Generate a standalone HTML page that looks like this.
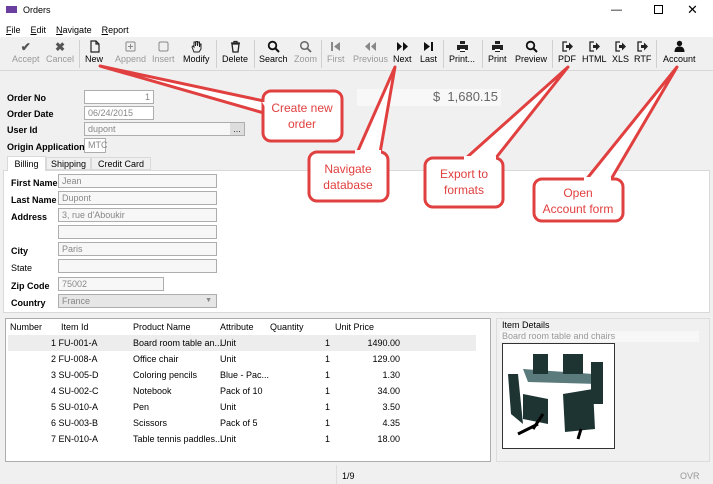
<!DOCTYPE html>
<html><head><meta charset="utf-8"><style>
*{box-sizing:border-box;margin:0;padding:0}
body{width:713px;height:484px;overflow:hidden;background:#f0f0f0;font-family:"Liberation Sans",sans-serif;font-size:9px;color:#000;position:relative}
.a{position:absolute}
.tb{position:absolute;top:40px;text-align:center;font-size:9px;color:#000}
.tb.d{color:#999}
.tb i{display:block;height:14px;font-style:normal;font-size:12px;font-weight:bold;line-height:14px}
.tb svg{display:block;margin:0 auto 1px;width:13px;height:13px}
.sep{position:absolute;top:40px;width:1px;height:28px;background:#d0d0d0}
.lbl{position:absolute;font-weight:bold;font-size:9px}
.inp{position:absolute;background:#f7f7f7;border:1px solid #adadad;height:14px;font-size:9px;color:#888;padding-left:3px;line-height:12px}
.w{background:#fff}
.row{position:absolute;left:10px;width:466px;height:16px;font-size:9px;line-height:16px}
.row span{position:absolute;white-space:nowrap}
</style></head><body>
<div class="a" style="left:0;top:0;width:713px;height:20px;background:#fff"></div>
<div class="a" style="left:6px;top:6px;width:11px;height:7px;background:#6a3fa0"></div>
<div class="a" style="left:23px;top:5px;font-size:9px">Orders</div>
<div class="a" style="left:611px;top:4px;font-size:11px">—</div>
<div class="a" style="left:654px;top:5px;width:9px;height:9px;border:1px solid #000"></div>
<div class="a" style="left:687px;top:2px;font-size:13px">✕</div>
<div class="a" style="left:0;top:20px;width:713px;height:17px;background:#fff"></div>
<div class="a" style="left:6px;top:25px"><u>F</u>ile &nbsp;&nbsp; <u>E</u>dit &nbsp;&nbsp; <u>N</u>avigate &nbsp;&nbsp; <u>R</u>eport</div>
<div class="a" style="left:0;top:70px;width:713px;height:1px;background:#d8d8d8"></div>
<div class="tb d" style="left:12px"><i style="color:#555">✔</i>Accept</div>
<div class="tb d" style="left:46px"><i style="color:#555">✖</i>Cancel</div>
<div class="sep" style="left:79px"></div>
<div class="tb" style="left:85px"><svg viewBox="0 0 13 13"><path d="M3 1h5l3 3v8H3z M8 1v3h3" fill="none" stroke="#222" stroke-width="1.2"/></svg>New</div>
<div class="tb d" style="left:115px"><svg viewBox="0 0 13 13"><rect x="2" y="2" width="9" height="9" rx="1" fill="none" stroke="#888"/><path d="M6.5 4v5M4 6.5h5" stroke="#888"/></svg>Append</div>
<div class="tb d" style="left:152px"><svg viewBox="0 0 13 13"><rect x="2" y="2" width="9" height="9" rx="1.5" fill="none" stroke="#888"/></svg>Insert</div>
<div class="tb" style="left:183px"><svg viewBox="0 0 13 13"><path d="M4 12 L2 7 L3 6 L4 7 V2 L5.5 2 V6 L6 1.5 L7.5 1.5 V6 L8 2 L9.5 2 V7 L10 4 L11 4 V9 L9 12z" fill="none" stroke="#222"/></svg>Modify</div>
<div class="sep" style="left:216px"></div>
<div class="tb" style="left:222px"><svg viewBox="0 0 13 13"><path d="M2 3h9M5 3V1.5h3V3M3 4h7l-1 8H4z" fill="none" stroke="#222" stroke-width="1.3"/></svg>Delete</div>
<div class="sep" style="left:254px"></div>
<div class="tb" style="left:259px"><svg viewBox="0 0 13 13"><circle cx="5.5" cy="5.5" r="3.8" fill="none" stroke="#111" stroke-width="1.8"/><path d="M8 8l4 4" stroke="#111" stroke-width="2"/></svg>Search</div>
<div class="tb d" style="left:294px"><svg viewBox="0 0 13 13"><circle cx="5.5" cy="5.5" r="3.8" fill="none" stroke="#666" stroke-width="1.5"/><path d="M8 8l4 4" stroke="#666" stroke-width="1.8"/></svg>Zoom</div>
<div class="sep" style="left:321px"></div>
<div class="tb d" style="left:327px"><svg viewBox="0 0 13 13"><path d="M3 2v9" stroke="#888" stroke-width="2"/><path d="M11 2v9L5 6.5z" fill="#888"/></svg>First</div>
<div class="tb d" style="left:353px"><svg viewBox="0 0 13 13"><path d="M6 2v9L1 6.5zM12 2v9L7 6.5z" fill="#888"/></svg>Previous</div>
<div class="tb" style="left:393px"><svg viewBox="0 0 13 13"><path d="M1 2v9l5-4.5zM7 2v9l5-4.5z" fill="#111"/></svg>Next</div>
<div class="tb" style="left:420px"><svg viewBox="0 0 13 13"><path d="M2 2v9l6-4.5z" fill="#111"/><path d="M10 2v9" stroke="#111" stroke-width="2"/></svg>Last</div>
<div class="sep" style="left:443px"></div>
<div class="tb" style="left:449px"><svg viewBox="0 0 13 13"><path d="M4 1h5v3H4zM1 5h11v5H9v2H4v-2H1z" fill="#222"/><rect x="4" y="9" width="5" height="2" fill="#fff"/></svg>Print...</div>
<div class="sep" style="left:482px"></div>
<div class="tb" style="left:488px"><svg viewBox="0 0 13 13"><path d="M4 1h5v3H4zM1 5h11v5H9v2H4v-2H1z" fill="#222"/><rect x="4" y="9" width="5" height="2" fill="#fff"/></svg>Print</div>
<div class="tb" style="left:515px"><svg viewBox="0 0 13 13"><circle cx="5.5" cy="5.5" r="3.8" fill="none" stroke="#111" stroke-width="1.8"/><path d="M8 8l4 4" stroke="#111" stroke-width="2"/></svg>Preview</div>
<div class="sep" style="left:552px"></div>
<div class="tb" style="left:558px"><svg viewBox="0 0 13 13"><path d="M6 2H2v9h4" fill="none" stroke="#222" stroke-width="1.3"/><path d="M5 5h3V2.5l4 4-4 4V8H5z" fill="#222"/></svg>PDF</div>
<div class="tb" style="left:582px"><svg viewBox="0 0 13 13"><path d="M6 2H2v9h4" fill="none" stroke="#222" stroke-width="1.3"/><path d="M5 5h3V2.5l4 4-4 4V8H5z" fill="#222"/></svg>HTML</div>
<div class="tb" style="left:612px"><svg viewBox="0 0 13 13"><path d="M6 2H2v9h4" fill="none" stroke="#222" stroke-width="1.3"/><path d="M5 5h3V2.5l4 4-4 4V8H5z" fill="#222"/></svg>XLS</div>
<div class="tb" style="left:634px"><svg viewBox="0 0 13 13"><path d="M6 2H2v9h4" fill="none" stroke="#222" stroke-width="1.3"/><path d="M5 5h3V2.5l4 4-4 4V8H5z" fill="#222"/></svg>RTF</div>
<div class="sep" style="left:656px"></div>
<div class="tb" style="left:663px"><svg viewBox="0 0 13 13"><circle cx="6.5" cy="3.5" r="2.7" fill="#111"/><path d="M1.5 12c0-4 2-5.5 5-5.5s5 1.5 5 5.5z" fill="#111"/></svg>Account</div>

<div class="lbl" style="left:7px;top:93px">Order No</div>
<div class="inp w" style="left:84px;top:90px;width:70px;text-align:right;padding-right:3px">1</div>
<div class="lbl" style="left:7px;top:109px">Order Date</div>
<div class="inp w" style="left:84px;top:106px;width:70px">06/24/2015</div>
<div class="lbl" style="left:7px;top:125px">User Id</div>
<div class="inp" style="left:84px;top:122px;width:161px">dupont<span style="position:absolute;right:0;top:0;width:14px;height:12px;background:#ddd;color:#333;text-align:center">...</span></div>
<div class="lbl" style="left:7px;top:142px">Origin Application</div>
<div class="inp w" style="left:84px;top:138px;width:22px;height:15px">MTC</div>
<div class="a" style="left:357px;top:89px;width:144px;height:17px;background:#f8f8f8;text-align:right;font-size:13px;color:#666;padding-right:3px">$&nbsp; 1,680.15</div>

<div class="a" style="left:3px;top:170px;width:707px;height:143px;background:#fff;border:1px solid #d9d9d9"></div>
<div class="a" style="left:7px;top:156px;width:39px;height:15px;background:#fff;border:1px solid #d9d9d9;border-bottom:none;text-align:center;line-height:14px">Billing</div>
<div class="a" style="left:46px;top:157px;width:45px;height:13px;border:1px solid #d9d9d9;text-align:center;line-height:12px">Shipping</div>
<div class="a" style="left:91px;top:157px;width:60px;height:13px;border:1px solid #d9d9d9;text-align:center;line-height:12px">Credit Card</div>
<div class="lbl" style="left:11px;top:178px">First Name</div><div class="inp" style="left:58px;top:174px;width:159px">Jean</div>
<div class="lbl" style="left:11px;top:195px">Last Name</div><div class="inp" style="left:58px;top:191px;width:159px">Dupont</div>
<div class="lbl" style="left:11px;top:212px">Address</div><div class="inp" style="left:58px;top:208px;width:159px">3, rue d'Aboukir</div>
<div class="inp" style="left:58px;top:225px;width:159px"></div>
<div class="lbl" style="left:11px;top:246px">City</div><div class="inp" style="left:58px;top:242px;width:159px">Paris</div>
<div class="a" style="left:11px;top:263px">State</div><div class="inp" style="left:58px;top:259px;width:159px"></div>
<div class="lbl" style="left:11px;top:281px">Zip Code</div><div class="inp" style="left:58px;top:277px;width:106px">75002</div>
<div class="lbl" style="left:11px;top:298px">Country</div><div class="inp" style="left:58px;top:294px;width:159px;background:#e6e6e6">France<span style="position:absolute;right:4px;font-size:7px">▼</span></div>

<div class="a" style="left:5px;top:318px;width:486px;height:144px;background:#fff;border:1px solid #adadad"></div>
<div class="row" style="top:319px"><span style="left:0">Number</span><span style="left:51px">Item Id</span><span style="left:123px">Product Name</span><span style="left:210px">Attribute</span><span style="left:260px">Quantity</span><span style="left:325px">Unit Price</span></div>
<div class="a" style="left:8px;top:335px;width:468px;height:16px;background:#ededed"></div>
<div class="row" style="top:335px"><span style="left:41px">1 FU-001-A</span><span style="left:123px">Board room table an...</span><span style="left:210px">Unit</span><span style="left:315px">1</span><span style="left:330px;width:60px;text-align:right">1490.00</span></div>
<div class="row" style="top:351px"><span style="left:41px">2 FU-008-A</span><span style="left:123px">Office chair</span><span style="left:210px">Unit</span><span style="left:315px">1</span><span style="left:330px;width:60px;text-align:right">129.00</span></div>
<div class="row" style="top:367px"><span style="left:41px">3 SU-005-D</span><span style="left:123px">Coloring pencils</span><span style="left:210px">Blue - Pac...</span><span style="left:315px">1</span><span style="left:330px;width:60px;text-align:right">1.30</span></div>
<div class="row" style="top:383px"><span style="left:41px">4 SU-002-C</span><span style="left:123px">Notebook</span><span style="left:210px">Pack of 10</span><span style="left:315px">1</span><span style="left:330px;width:60px;text-align:right">34.00</span></div>
<div class="row" style="top:399px"><span style="left:41px">5 SU-010-A</span><span style="left:123px">Pen</span><span style="left:210px">Unit</span><span style="left:315px">1</span><span style="left:330px;width:60px;text-align:right">3.50</span></div>
<div class="row" style="top:415px"><span style="left:41px">6 SU-003-B</span><span style="left:123px">Scissors</span><span style="left:210px">Pack of 5</span><span style="left:315px">1</span><span style="left:330px;width:60px;text-align:right">4.35</span></div>
<div class="row" style="top:431px"><span style="left:41px">7 EN-010-A</span><span style="left:123px">Table tennis paddles...</span><span style="left:210px">Unit</span><span style="left:315px">1</span><span style="left:330px;width:60px;text-align:right">18.00</span></div>
<div class="a" style="left:496px;top:318px;width:214px;height:144px;border:1px solid #ddd"></div>
<div class="a" style="left:502px;top:320px">Item Details</div>
<div class="a" style="left:500px;top:331px;width:199px;height:11px;background:#f7f7f7;color:#999;padding-left:2px">Board room table and chairs</div>
<div class="a" style="left:502px;top:343px;width:113px;height:106px;background:#fff;border:1px solid #333">
<svg width="111" height="104" viewBox="0 0 111 104"><path d="M20 25 L90 30 L95 40 L25 38Z" fill="#5a7a7c"/><path d="M5 30 L15 30 L20 80 L8 70Z M30 10 L45 10 L45 30 L30 30Z M60 10 L80 10 L80 30 L60 30Z M88 18 L100 18 L100 60 L88 60Z M60 50 L90 45 L92 85 L62 88Z M20 50 L45 55 L45 80 L20 75Z" fill="#1e3433"/><path d="M15 90 L35 80 M75 95 L78 85 M40 70 L30 85" stroke="#000" stroke-width="3"/></svg></div>
<div class="a" style="left:342px;top:471px">1/9</div>
<div class="a" style="left:680px;top:471px;color:#999">OVR</div>
<div class="a" style="left:336px;top:465px;width:1px;height:19px;background:#ddd"></div>

<svg class="a" style="left:0;top:0" width="713" height="484">
<g fill="#fff" stroke="#e0403f" stroke-width="3" stroke-linejoin="round">
<path d="M100 66 L264 101 L264 113 Z"/>
<path d="M395 67 L357 153 L380 153 Z"/>
<path d="M568 67 L465 159 L495 159 Z"/>
<path d="M677 67 L585 181 L610 181 Z"/>
<rect x="263" y="91" width="79" height="50" rx="8"/>
<rect x="309" y="152" width="79" height="49" rx="8"/>
<rect x="425" y="158" width="78" height="49" rx="8"/>
<rect x="534" y="179" width="89" height="42" rx="8"/>
</g>
<g fill="#fff"><path d="M262 102 L268 102 L268 112Z"/><rect x="355" y="150" width="26" height="6"/><rect x="464" y="156" width="32" height="6"/><rect x="584" y="177" width="27" height="6"/></g>
<g fill="#e0403f" font-family="Liberation Sans,sans-serif" font-size="12" text-anchor="middle">
<text x="302" y="112">Create new</text><text x="302" y="128">order</text>
<text x="348" y="173">Navigate</text><text x="348" y="189">database</text>
<text x="464" y="178">Export to</text><text x="464" y="194">formats</text>
<text x="578" y="197">Open</text><text x="578" y="213">Account form</text>
</g></svg>
</body></html>
